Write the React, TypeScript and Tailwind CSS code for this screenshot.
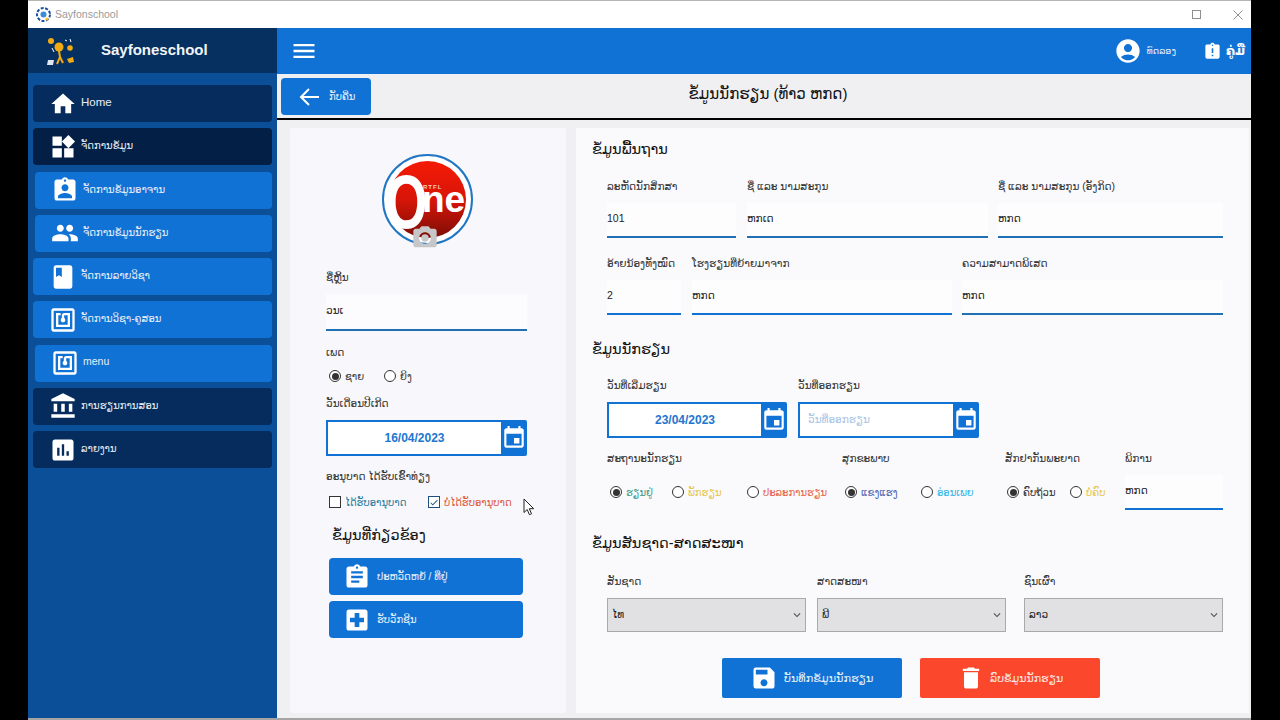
import { useState } from "react";
import {
  MdAccountBalance,
  MdAccountCircle,
  MdAssessment,
  MdAssignment,
  MdAssignmentInd,
  MdAssignmentLate,
  MdBook,
  MdCameraAlt,
  MdCheck,
  MdDelete,
  MdEvent,
  MdExpandMore,
  MdHome,
  MdLocalHospital,
  MdMenu,
  MdNfc,
  MdPeople,
  MdSave,
  MdWidgets,
} from "react-icons/md";
import type { IconType } from "react-icons";

type MenuItem = { label: string; icon: IconType; tone: "dark" | "active" | "blue"; inset?: boolean; text?: string };

const menu: MenuItem[] = [
  { label: "Home", icon: MdHome, tone: "dark", text: "text-[11.5px]" },
  { label: "ຈັດການຂໍ້ມູນ", icon: MdWidgets, tone: "active" },
  { label: "ຈັດການຂໍ້ມູນອາຈານ", icon: MdAssignmentInd, tone: "blue", inset: true },
  { label: "ຈັດການຂໍ້ມູນນັກຮຽນ", icon: MdPeople, tone: "blue", inset: true },
  { label: "ຈັດການລາຍວິຊາ", icon: MdBook, tone: "blue" },
  { label: "ຈັດການວິຊາ-ຄູສອນ", icon: MdNfc, tone: "blue" },
  { label: "menu", icon: MdNfc, tone: "blue", inset: true, text: "text-[10.5px]" },
  { label: "ການຮຽນການສອນ", icon: MdAccountBalance, tone: "dark" },
  { label: "ລາຍງານ", icon: MdAssessment, tone: "dark" },
];

const toneClass = {
  dark: "bg-[#052c5c]",
  active: "bg-[#031f45]",
  blue: "bg-[#1172d5]",
};

function SideItem({ item }: { item: MenuItem }) {
  const Icon = item.icon;
  return (
    <div className={`flex h-[37px] items-center rounded-[4px] pl-[16px] ${item.inset ? "ml-[2px]" : ""} ${toneClass[item.tone]}`}>
      <Icon className="h-[28px] w-[28px] flex-none text-white" />
      <span className={`ml-[4px] pb-[2px] text-[#e8eef6] ${item.text ?? "text-[10px]"}`}>{item.label}</span>
    </div>
  );
}

function Label({ children }: { children: React.ReactNode }) {
  return <div className="flex h-[18px] items-center whitespace-nowrap pt-[2px] text-[10.5px] text-[#333]">{children}</div>;
}

function Heading({ children, className = "" }: { children: React.ReactNode; className?: string }) {
  return <div className={`flex h-[24px] items-center pt-[2px] text-[14.5px] text-[#111] ${className}`}>{children}</div>;
}

function Field({ label, value, line = "border-[#1f70b5]", className = "" }: { label: string; value: string; line?: string; className?: string }) {
  return (
    <div className={className}>
      <Label>{label}</Label>
      <div className={`mt-[8px] flex h-[35px] items-center border-b-2 bg-white/60 pb-[2px] text-[10.5px] text-[#222] ${line}`}>{value}</div>
    </div>
  );
}

function Radio({ label, checked, color, width }: { label: string; checked?: boolean; color: string; width: string }) {
  return (
    <div className={`flex items-center ${width}`}>
      <span className="flex h-[12px] w-[12px] flex-none items-center justify-center rounded-full border border-[#333] bg-white">
        {checked && <span className="h-[7px] w-[7px] rounded-full bg-[#333]" />}
      </span>
      <span className={`ml-[4px] whitespace-nowrap text-[10px] ${color}`}>{label}</span>
    </div>
  );
}

function DateBox({ value, placeholder, className }: { value?: string; placeholder?: string; className: string }) {
  return (
    <div className={`flex h-[36px] ${className}`}>
      <div className="flex min-w-0 flex-1 items-center border-2 border-r-0 border-[#1172d5] bg-white">
        {value ? (
          <span className="w-full text-center text-[12px] font-bold text-[#2276cf]">{value}</span>
        ) : (
          <span className="pl-[8px] text-[10.5px] text-[#a9c5e6]">{placeholder}</span>
        )}
      </div>
      <div className="flex w-[26px] flex-none items-center justify-center rounded-r-[2px] bg-[#1172d5]">
        <MdEvent className="h-[26px] w-[26px] text-white" />
      </div>
    </div>
  );
}

function SelectBox({ value }: { value: string }) {
  return (
    <div className="flex h-[34px] items-center justify-between border border-[#a9a9a9] bg-[#e1e1e3] pl-[4px] pr-[1px] text-[10.5px] text-[#222]">
      <span>{value}</span>
      <MdExpandMore className="h-[14px] w-[14px] text-[#555]" />
    </div>
  );
}

function Logo() {
  return (
    <div className="relative ml-[56px] h-[91px] w-[91px] rounded-full border-2 border-[#2277c4] bg-white font-['Liberation_Sans',sans-serif] font-bold">
      <div className="absolute inset-[5px] rounded-full bg-gradient-to-b from-[#f51a05] via-[#d81508] to-[#7d0d05]" />
      <span className="absolute left-[-7px] top-[8px] w-[59px] scale-x-[0.71] text-center text-[76px] leading-[76px] text-white">O</span>
      <span className="absolute left-[38px] top-[33px] text-[37px] leading-[22px] text-white">ne</span>
      <span className="absolute left-[39px] top-[28px] text-[6px] leading-[6px] tracking-[1px] text-[#f3d0cb]">RTFL</span>
      <MdCameraAlt className="absolute left-[27px] top-[68px] h-[28px] w-[28px] text-[#c7c7c9]" />
    </div>
  );
}

function Cursor() {
  return (
    <svg className="absolute left-[233px] top-[370px]" width="12" height="18" viewBox="0 0 12 18">
      <path d="M1 1v13.5l3.2-3 2.2 5.2 2.1-.9-2.2-5.1H10.700z" fill="#fff" stroke="#222" strokeWidth="1" />
    </svg>
  );
}

export default function App() {
  const [name] = useState("ຫກດ");

  return (
    <div className="flex h-[720px] w-[1280px] overflow-hidden bg-black font-['Liberation_Sans','DejaVu_Sans',sans-serif]">
      <div className="ml-[28px] flex h-full w-[1223px] flex-col border-b-2 border-[#a5a5a5]">
        {/* title bar */}
        <div className="flex h-[28px] flex-none items-center border-t border-[#b5b5b5] bg-white pl-[8px]">
          <svg width="15" height="15" viewBox="0 0 15 15">
            <circle cx="7.500" cy="7.500" r="6.500" fill="#fff" stroke="#1d4f9c" strokeWidth="2" strokeDasharray="3 1.500" />
            <circle cx="7.500" cy="7.500" r="3" fill="#3d8ad6" />
            <circle cx="11" cy="12" r="1.500" fill="#f0bd1e" />
          </svg>
          <span className="ml-[4px] text-[10.5px] text-[#9a9a9a]">Sayfonschool</span>
          <div className="ml-auto mr-[8px] flex items-center">
            <span className="h-[9px] w-[9px] border border-[#8f8f8f]" />
            <svg className="ml-[32px]" width="10" height="10" viewBox="0 0 10 10">
              <path d="M0.500 0.500l9 9M9.500 0.500l-9 9" stroke="#8f8f8f" strokeWidth="1" />
            </svg>
          </div>
        </div>

        <div className="flex min-h-0 flex-1">
          {/* sidebar */}
          <aside className="flex w-[249px] flex-none flex-col bg-[#0a4f97]">
            <div className="flex h-[45px] flex-none items-center bg-[#06305f] pl-[19px]">
              <svg width="28" height="30" viewBox="0 0 28 30">
                <circle cx="4" cy="5" r="3" fill="#f4aa12" />
                <circle cx="12" cy="11" r="4.500" fill="#f4aa12" />
                <circle cx="23" cy="12" r="2.800" fill="#f4aa12" />
                <path d="M18 4l2 1M23 3l1 3M5 12l2 4" stroke="#fff" strokeWidth="1" />
                <path d="M12 15l1 6-3 7M13 21l3 6" stroke="#f4aa12" strokeWidth="2" fill="none" />
                <path d="M1 24h6l-1 5H0z" fill="#dfe6ef" />
                <path d="M20 23l6-2 1 5-5 1z" fill="#f4aa12" />
              </svg>
              <span className="ml-[26px] text-[15px] font-bold text-[#f2f4f7]">Sayfoneschool</span>
            </div>
            <nav className="mx-[5px] mt-[12px] flex flex-col gap-[6.25px]">
              {menu.map((m) => (
                <SideItem key={m.label + m.tone + (m.inset ? "i" : "")} item={m} />
              ))}
            </nav>
          </aside>

          {/* main */}
          <div className="flex min-w-0 flex-1 flex-col bg-[#f0f0f3]">
            <header className="flex h-[46px] flex-none items-center bg-[#1172d5] pl-[13px] pr-[6px] text-white">
              <MdMenu className="h-[28px] w-[28px]" />
              <MdAccountCircle className="ml-auto h-[28px] w-[28px]" />
              <span className="ml-[5px] text-[9.5px] text-[#e4eefa]">ທົດລອງ</span>
              <MdAssignmentLate className="ml-[27px] h-[19px] w-[19px]" />
              <span className="ml-[4px] text-[12px] font-bold">ຄູ່ມື</span>
            </header>

            <div className="flex h-[46px] flex-none items-start border-b-2 border-black pt-[4px]">
              <div className="ml-[4px] flex h-[37px] w-[90px] flex-none items-center rounded-[4px] bg-[#1172d5] pl-[17px] text-white">
                <svg width="24" height="24" viewBox="0 0 24 24" fill="none" stroke="#fff" strokeWidth="2">
                  <path d="M21 12H4M11 4l-8 8 8 8" />
                </svg>
                <span className="ml-[7px] text-[10px] text-[#e8f1fb]">ກັບຄືນ</span>
              </div>
              <div className="flex h-[33px] flex-1 items-center justify-center pr-[86px] text-[15px] text-[#111]">ຂໍ້ມູນນັກຮຽນ (ທ້າວ {name})</div>
            </div>

            <div className="flex min-h-0 flex-1 pl-[13px] pt-[8px]">
              {/* left card */}
              <section className="relative h-[585px] w-[276px] flex-none rounded-[3px] bg-[#f8f8fc] px-[36px] pt-[26px]">
                <Logo />
                <div className="mt-[23px]">
                  <Label>ຊື່ຫຼິ້ນ</Label>
                  <div className="mt-[8px] flex h-[37px] w-[201px] items-center border-b-2 border-[#1f70b5] bg-white/60 pb-[2px] text-[10.5px] text-[#222]">ວນເ</div>
                </div>
                <div className="mt-[12px]"><Label>ເພດ</Label></div>
                <div className="ml-[3px] mt-[6px] flex h-[18px] items-center">
                  <Radio label="ຊາຍ" checked color="text-[#333]" width="w-[55px]" />
                  <Radio label="ຍິງ" color="text-[#333]" width="w-[50px]" />
                </div>
                <div className="mt-[9px]"><Label>ວັນເດືອນປີເກີດ</Label></div>
                <DateBox value="16/04/2023" className="mt-[8px] w-[201px]" />
                <div className="mt-[11px]"><Label>ອະນຸບາດ ໄດ້ຮັບເຂົ້າທ່ຽງ</Label></div>
                <div className="ml-[3px] mt-[8px] flex h-[18px] items-center">
                  <div className="flex w-[99px] items-center">
                    <span className="h-[12px] w-[12px] flex-none border border-[#333] bg-white" />
                    <span className="ml-[4px] whitespace-nowrap text-[10px] text-[#2a7da0]">ໄດ້ຮັບອານຸບາດ</span>
                  </div>
                  <div className="flex items-center">
                    <span className="flex h-[12px] w-[12px] flex-none items-center justify-center border border-[#1f4f80] bg-white">
                      <MdCheck className="h-[11px] w-[11px] text-[#1f4f80]" />
                    </span>
                    <span className="ml-[4px] whitespace-nowrap text-[10px] text-[#e05a3a]">ບໍ່ໄດ້ຮັບອານຸບາດ</span>
                  </div>
                </div>
                <Heading className="ml-[6px] mt-[12px]">ຂໍ້ມູນທີ່ກ່ຽວຂ້ອງ</Heading>
                <div className="ml-[3px] mt-[11px] flex w-[194px] flex-col gap-[6px]">
                  <div className="flex h-[37px] items-center rounded-[4px] bg-[#1172d5] pl-[14px] text-white">
                    <MdAssignment className="h-[28px] w-[28px]" />
                    <span className="ml-[6px] text-[10px] text-[#e8f1fb]">ປະຫວັດຫຍໍ້ / ທີ່ຢູ່</span>
                  </div>
                  <div className="flex h-[37px] items-center rounded-[4px] bg-[#1172d5] pl-[14px] text-white">
                    <MdLocalHospital className="h-[28px] w-[28px]" />
                    <span className="ml-[6px] text-[10px] text-[#e8f1fb]">ຮັບວັກຊີນ</span>
                  </div>
                </div>
                <Cursor />
              </section>

              {/* right card */}
              <section className="ml-[10px] mr-[2px] h-[585px] min-w-0 flex-1 bg-[#fafafd] pt-[9px]">
                <Heading className="ml-[16px]">ຂໍ້ມູນພື້ນຖານ</Heading>
                <div className="ml-[31px] mt-[16px] flex">
                  <Field label="ລະຫັດນັກສຶກສາ" value="101" className="w-[129px]" />
                  <Field label="ຊື່ ແລະ ນາມສະກຸນ" value="ຫກເດ" className="ml-[11px] w-[241px]" />
                  <Field label="ຊື່ ແລະ ນາມສະກຸນ (ອັງກິດ)" value="ຫກດ" className="ml-[10px] w-[225px]" />
                </div>
                <div className="ml-[31px] mt-[16px] flex">
                  <Field label="ອ້າຍນ້ອງທັງໝົດ" value="2" line="border-[#1172d5]" className="w-[74px]" />
                  <Field label="ໂຮງຮຽນທີ່ຍ້າຍມາຈາກ" value="ຫກດ" line="border-[#1172d5]" className="ml-[11px] w-[260px]" />
                  <Field label="ຄວາມສາມາດພິເສດ" value="ຫກດ" className="ml-[10px] w-[261px]" />
                </div>

                <Heading className="ml-[16px] mt-[22px]">ຂໍ້ມູນນັກຮຽນ</Heading>
                <div className="ml-[31px] mt-[15px] flex gap-x-[11px]">
                  <div className="w-[180px]"><Label>ວັນທີ່ເລີ່ມຮຽນ</Label><DateBox value="23/04/2023" className="mt-[8px]" /></div>
                  <div className="w-[181px]"><Label>ວັນທີ່ອອກຮຽນ</Label><DateBox placeholder="ວັນທີ່ອອກຮຽນ" className="mt-[8px]" /></div>
                </div>
                <div className="ml-[31px] mt-[11px] grid grid-cols-[235px_163px_120px_98px]">
                  <div>
                    <Label>ສະຖານະນັກຮຽນ</Label>
                    <div className="ml-[3px] mt-[16px] flex h-[18px] items-center">
                      <Radio label="ຮຽນຢູ່" checked color="text-[#3a9a8a]" width="w-[62px]" />
                      <Radio label="ພັກຮຽນ" color="text-[#e8c548]" width="w-[75px]" />
                      <Radio label="ປະລະການຮຽນ" color="text-[#e8654a]" width="w-[90px]" />
                    </div>
                  </div>
                  <div>
                    <Label>ສຸກຂະພາບ</Label>
                    <div className="ml-[3px] mt-[16px] flex h-[18px] items-center">
                      <Radio label="ແຂງແຮງ" checked color="text-[#4a5fb0]" width="w-[76px]" />
                      <Radio label="ອ່ອນເພຍ" color="text-[#35b4e8]" width="w-[70px]" />
                    </div>
                  </div>
                  <div>
                    <Label>ສັກຢາກັນພະຍາດ</Label>
                    <div className="ml-[2px] mt-[16px] flex h-[18px] items-center">
                      <Radio label="ຄົບຖ້ວນ" checked color="text-[#333]" width="w-[63px]" />
                      <Radio label="ບໍ່ຄົບ" color="text-[#e8c548]" width="w-[45px]" />
                    </div>
                  </div>
                  <Field label="ພິການ" value="ຫກດ" line="border-[#1172d5]" />
                </div>

                <Heading className="ml-[16px] mt-[21px]">ຂໍ້ມູນສັນຊາດ-ສາດສະໜາ</Heading>
                <div className="ml-[31px] mt-[17px] flex">
                  <div className="w-[199px]"><Label>ສັນຊາດ</Label><div className="mt-[8px]"><SelectBox value="ໄທ" /></div></div>
                  <div className="ml-[11px] w-[189px]"><Label>ສາດສະໜາ</Label><div className="mt-[8px]"><SelectBox value="ພີ" /></div></div>
                  <div className="ml-[18px] w-[199px]"><Label>ຊົນເຜົ່າ</Label><div className="mt-[8px]"><SelectBox value="ລາວ" /></div></div>
                </div>
                <div className="ml-[146px] mt-[26px] flex gap-[18px] text-white">
                  <div className="flex h-[40px] w-[180px] items-center rounded-[2px] bg-[#1172d5] pl-[28px]">
                    <MdSave className="h-[28px] w-[28px]" />
                    <span className="ml-[6px] text-[11.2px] text-[#e8f1fb]">ບັນທຶກຂໍ້ມູນນັກຮຽນ</span>
                  </div>
                  <div className="flex h-[40px] w-[180px] items-center rounded-[2px] bg-[#fb472c] pl-[37px]">
                    <MdDelete className="h-[28px] w-[28px]" />
                    <span className="ml-[5px] text-[11px] text-[#fde9e5]">ລົບຂໍ້ມູນນັກຮຽນ</span>
                  </div>
                </div>
              </section>
            </div>
          </div>
        </div>
      </div>
    </div>
  );
}
